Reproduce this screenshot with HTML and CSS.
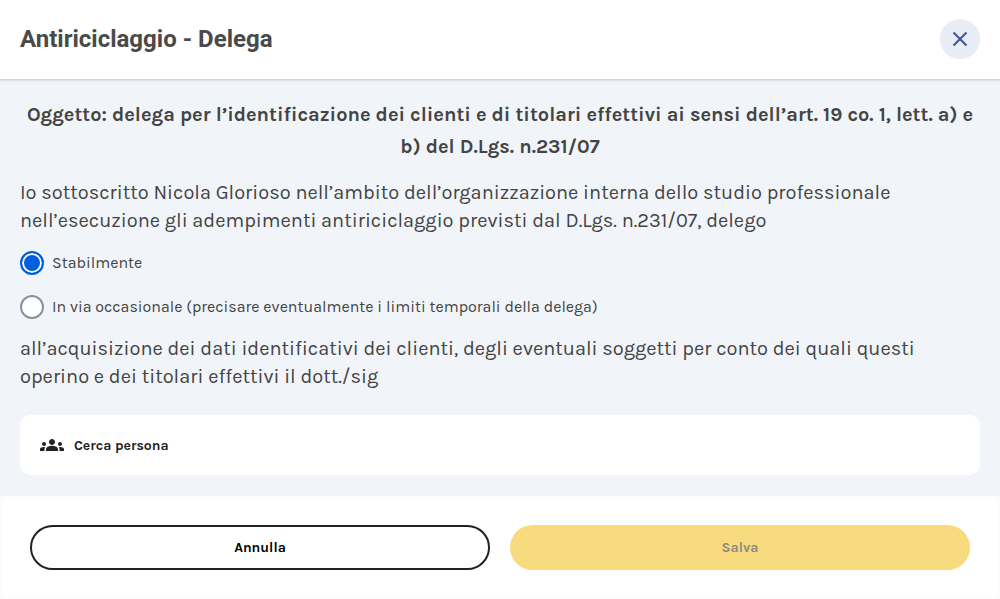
FILE: index.html
```html
<!DOCTYPE html>
<html lang="it">

<head>
  <meta charset="UTF-8" />
  <meta name="viewport" content="width=device-width, initial-scale=1.0" />
  <title>Antiriciclaggio - Delega</title>
  <link rel="stylesheet" href="styles.css">
</head>

<body>
  <form class="modal">
    <header class="modal-header">
      <h1>Antiriciclaggio - Delega</h1>
      <button type="button" class="close-btn" aria-label="Chiudi">
        <svg width="24" height="24" viewBox="0 0 24 24" fill="none" stroke="#3a5792" stroke-width="2">
          <path d="M5.5 5.5 18.5 18.5M18.5 5.5 5.5 18.5" />
        </svg>
      </button>
    </header>

    <main class="modal-body">
      <h2>Oggetto: delega per l’identificazione dei clienti e di titolari effettivi ai sensi dell’art. 19 co. 1, lett. a) e b) del D.Lgs. n.231/07</h2>
      <p>Io sottoscritto Nicola Glorioso nell’ambito dell’organizzazione interna dello studio professionale nell’esecuzione gli adempimenti antiriciclaggio previsti dal D.Lgs. n.231/07, delego</p>

      <div class="radio-group">
        <label class="radio" for="stabilmente">
          <input type="radio" id="stabilmente" name="durata" checked />
          Stabilmente
        </label>
        <label class="radio" for="occasionale">
          <input type="radio" id="occasionale" name="durata" />
          In via occasionale (precisare eventualmente i limiti temporali della delega)
        </label>
      </div>

      <p>all’acquisizione dei dati identificativi dei clienti, degli eventuali soggetti per conto dei quali questi operino e dei titolari effettivi il dott./sig</p>

      <button type="button" class="search-person">
        <svg width="24" height="24" viewBox="0 0 24 24" fill="#222">
          <path d="M12 12.75c1.63 0 3.07.39 4.24.9 1.08.48 1.76 1.56 1.76 2.73V18H6v-1.61c0-1.18.68-2.26 1.76-2.73 1.17-.52 2.61-.91 4.24-.91zM4 13c1.1 0 2-.9 2-2s-.9-2-2-2-2 .9-2 2 .9 2 2 2zm1.13 1.1C4.76 14.04 4.39 14 4 14c-.99 0-1.93.21-2.78.58C.48 14.9 0 15.62 0 16.43V18h4.5v-1.61c0-.83.23-1.61.63-2.29zM20 13c1.1 0 2-.9 2-2s-.9-2-2-2-2 .9-2 2 .9 2 2 2zm4 3.43c0-.81-.48-1.53-1.22-1.85-.85-.37-1.79-.58-2.78-.58-.39 0-.76.04-1.13.1.4.68.63 1.46.63 2.29V18H24v-1.57zM12 6c1.66 0 3 1.34 3 3s-1.34 3-3 3-3-1.34-3-3 1.34-3 3-3z" />
        </svg>
        Cerca persona
      </button>
    </main>

    <footer class="modal-footer">
      <button type="button" class="btn btn-outline">Annulla</button>
      <button type="submit" class="btn btn-primary" disabled>Salva</button>
    </footer>
  </form>
</body>

</html>
```
FILE: styles.css
```css
* {
  box-sizing: border-box;
}

body {
  margin: 0;
  background: #fff;
  color: #444;
  font-family: Karla, Inter, sans-serif;
}

.modal {
  display: flex;
  flex-direction: column;
  min-height: 100vh;
}

.modal-header {
  display: flex;
  justify-content: space-between;
  align-items: center;
  padding: 19px 20px 20px;
  background: #fff;
  box-shadow: 0 1px 3px rgba(0, 0, 0, 0.2);
  z-index: 1;
}

.modal-header h1 {
  margin: 0;
  font-family: Roboto, sans-serif;
  font-size: 24px;
  font-weight: 700;
  line-height: 34px;
  color: #4a4a4a;
}

.close-btn {
  display: flex;
  justify-content: center;
  align-items: center;
  width: 40px;
  height: 40px;
  padding: 0;
  border: none;
  border-radius: 50%;
  background: #e7ecf5;
  cursor: pointer;
}

.modal-body {
  display: flex;
  flex-direction: column;
  gap: 16px;
  padding: 20px 20px 21px;
  background: #f1f5fa;
}

.modal-body h2 {
  margin: 0;
  font-size: 20px;
  font-weight: 700;
  line-height: 32px;
  text-align: center;
}

.modal-body p {
  margin: 0;
  font-size: 20px;
  line-height: 28px;
}

.radio-group {
  display: flex;
  flex-direction: column;
  gap: 20px;
}

.radio {
  display: flex;
  align-items: center;
  gap: 8px;
  font-size: 16px;
  line-height: 24px;
}

.radio input {
  appearance: none;
  flex: none;
  width: 24px;
  height: 24px;
  margin: 0;
  border: 2px solid #8f8f9d;
  border-radius: 50%;
  background: #fff;
}

.radio input:checked {
  border-color: #0060df;
  background: #0060df;
  box-shadow: inset 0 0 0 2px #fff;
}

.search-person {
  display: flex;
  align-items: center;
  gap: 10px;
  height: 60px;
  margin-top: 8px;
  padding: 0 20px;
  border: none;
  border-radius: 10px;
  background: #fff;
  color: #222;
  font-family: inherit;
  font-size: 14px;
  font-weight: 700;
  cursor: pointer;
}

.modal-footer {
  display: flex;
  gap: 20px;
  padding: 29px 30px;
  background: #fff;
  box-shadow: inset 0 0 6px rgba(0, 0, 0, 0.04);
}

.btn {
  flex: 1;
  height: 45px;
  border: 2px solid;
  border-radius: 23px;
  font-family: inherit;
  font-size: 14px;
  font-weight: 700;
  cursor: pointer;
}

.btn-outline {
  border-color: #222;
  background: #fff;
  color: #000;
}

.btn-primary {
  border-color: #f8db7f;
  background: #f8db7f;
  color: #8e8a80;
}
```
